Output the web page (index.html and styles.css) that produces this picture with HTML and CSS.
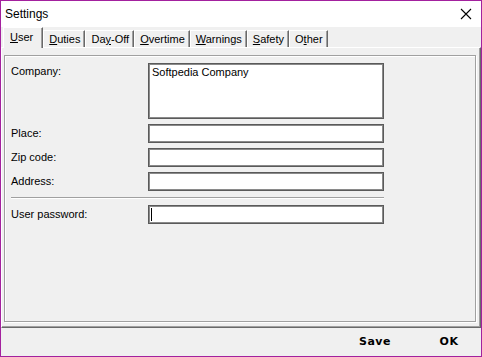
FILE: index.html
```html
<!DOCTYPE html>
<html>
<head>
<meta charset="utf-8">
<link rel="stylesheet" href="styles.css">
</head>
<body>
<div class="window">
  <div class="titlebar">
    <span class="title">Settings</span>
    <svg class="close" width="12" height="12" viewBox="0 0 12 12"><path d="M1 1 L11 11 M11 1 L1 11" stroke="#000" stroke-width="1.1" fill="none"/></svg>
  </div>
  <div class="tabs">
    <div class="tab active"><u>U</u>ser</div>
    <div class="tab"><u>D</u>uties</div>
    <div class="tab">Da<u>y</u>-Off</div>
    <div class="tab"><u>O</u>vertime</div>
    <div class="tab"><u>W</u>arnings</div>
    <div class="tab"><u>S</u>afety</div>
    <div class="tab">O<u>t</u>her</div>
  </div>
  <div class="panel">
    <div class="group">
      <div class="form">
        <label class="lbl top">Company:</label>
        <div class="field area">Softpedia Company</div>
        <label class="lbl">Place:</label>
        <div class="field"></div>
        <label class="lbl">Zip code:</label>
        <div class="field"></div>
        <label class="lbl">Address:</label>
        <div class="field"></div>
        <div class="sep"></div>
        <label class="lbl">User password:</label>
        <div class="field"><span class="caret"></span></div>
      </div>
    </div>
  </div>
  <div class="footer">
    <span class="btn">Save</span>
    <span class="btn">OK</span>
  </div>
</div>
</body>
</html>
```
FILE: styles.css
```css
html, body {
  margin: 0;
  padding: 0;
}
body {
  font-family: "Liberation Sans", Arial, sans-serif;
  font-size: 11px;
  color: #000;
}
.window {
  width: 482px;
  height: 357px;
  box-sizing: border-box;
  border: 1px solid #a3219e;
  background: #f0f0f0;
  display: flex;
  flex-direction: column;
  overflow: hidden;
}
.titlebar {
  height: 26px;
  background: #fff;
  display: flex;
  align-items: center;
  justify-content: space-between;
  padding: 0 9px 0 4px;
  flex: none;
}
.title {
  font-size: 12px;
}
.close {
  display: block;
}
.tabs {
  height: 20px;
  display: flex;
  align-items: flex-end;
  padding-left: 2px;
  flex: none;
  position: relative;
  z-index: 2;
}
.tab {
  height: 17px;
  box-sizing: border-box;
  padding: 2px 4px 0 5px;
  border-left: 1px solid #fff;
  border-top: 1px solid #fff;
  border-right: 1px solid #696969;
  box-shadow: inset -1px 0 0 #a0a0a0;
  line-height: 13px;
  white-space: nowrap;
}
.tab.active {
  height: 21px;
  margin-bottom: -1px;
  padding: 3px 9px 0 6px;
  background: #f0f0f0;
}
.panel {
  height: 281px;
  box-sizing: border-box;
  border-top: 1px solid #fff;
  border-left: 1px solid #fff;
  border-right: 1px solid #696969;
  border-bottom: 1px solid #696969;
  box-shadow: inset -1px -1px 0 #a0a0a0;
  padding: 7px 0 0 2px;
  flex: none;
}
.group {
  width: 472px;
  height: 267px;
  box-sizing: border-box;
  border: 1px solid #a0a0a0;
  box-shadow: 1px 1px 0 #fff, inset 1px 1px 0 #fff;
  padding: 7px 0 0 6px;
}
.form {
  display: grid;
  grid-template-columns: 137px 236px;
  grid-template-rows: 56px 19px 19px 19px 4px 19px;
  row-gap: 5px;
  align-items: center;
}
.lbl {
  line-height: 13px;
}
.lbl.top {
  align-self: start;
  padding-top: 2px;
}
.field {
  height: 19px;
  box-sizing: border-box;
  background: #fff;
  border: 1px solid #5a5a5a;
  box-shadow: inset 1px 1px 0 #8a8a8a, inset -1px -1px 0 #8a8a8a;
  padding: 2px 3px;
  line-height: 13px;
}
.form > .area {
  height: 56px;
  align-self: start;
}
.sep {
  grid-column: 1 / 3;
  height: 2px;
  box-sizing: border-box;
  border-top: 1px solid #a0a0a0;
  border-bottom: 1px solid #fff;
  align-self: center;
}
.caret {
  display: block;
  width: 1px;
  height: 13px;
  background: #000;
  margin-left: -1px;
}
.footer {
  flex: 1;
  display: flex;
  justify-content: flex-end;
  align-items: center;
  gap: 10px;
  padding-bottom: 1px;
}
.btn {
  width: 64px;
  text-align: center;
  font-weight: bold;
  font-family: "DejaVu Sans", sans-serif;
  font-size: 11px;
  letter-spacing: 0.5px;
}
```
